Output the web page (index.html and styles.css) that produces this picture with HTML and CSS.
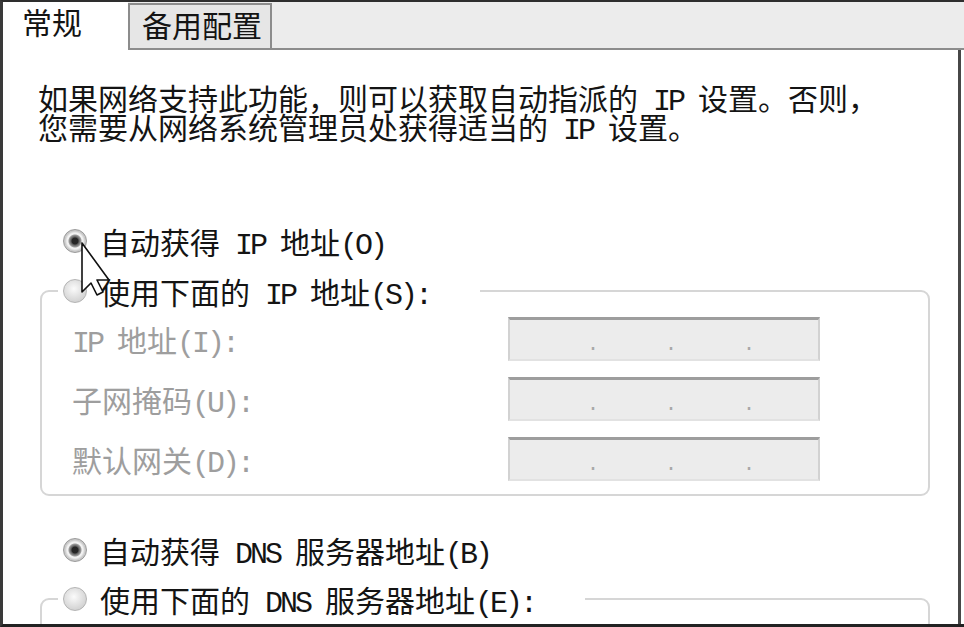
FILE: index.html
```html
<!DOCTYPE html>
<html lang="zh-CN">
<head>
  <meta charset="UTF-8" />
  <title>Internet 协议 (TCP/IP) 属性</title>
  <link rel="stylesheet" href="styles.css">
</head>
<body>
  <div class="dialog">
    <div class="tabs">
      <div class="tab tab-active">常规</div>
      <div class="tab">备用配置</div>
      <div class="tab-rest"></div>
    </div>

    <div class="panel">
      <p class="intro">如果网络支持此功能，则可以获取自动指派的<span class="en"> IP </span>设置。否则，<br>您需要从网络系统管理员处获得适当的<span class="en"> IP </span>设置。</p>

      <div class="option option-ip"><span class="radio checked"></span><span>自动获得<span class="en"> IP </span>地址<span class="en">(O)</span></span></div>
      <fieldset class="group">
        <legend class="option"><span class="radio"></span><span>使用下面的<span class="en"> IP </span>地址<span class="en">(S):</span></span></legend>
        <div class="fields">
          <span class="field-label"><span class="en">IP </span>地址<span class="en">(I):</span></span>
          <div class="ip-box"><span>.</span><span>.</span><span>.</span></div>
          <span class="field-label">子网掩码<span class="en">(U):</span></span>
          <div class="ip-box"><span>.</span><span>.</span><span>.</span></div>
          <span class="field-label">默认网关<span class="en">(D):</span></span>
          <div class="ip-box"><span>.</span><span>.</span><span>.</span></div>
        </div>
      </fieldset>

      <div class="option option-dns"><span class="radio checked"></span><span>自动获得<span class="en"> DNS </span>服务器地址<span class="en">(B)</span></span></div>
      <fieldset class="group group-dns">
        <legend class="option"><span class="radio"></span><span>使用下面的<span class="en"> DNS </span>服务器地址<span class="en">(E):</span></span></legend>
        <div class="fields"></div>
      </fieldset>
    </div>

    <!-- mouse pointer over the first radio -->
    <svg class="cursor" width="34" height="60" viewBox="0 0 34 60">
      <polygon points="1,1 1,50 10,41 16,53 22,50 16,38 28,38" fill="#fff" stroke="#111" stroke-width="1.6" stroke-linejoin="round"/>
    </svg>
  </div>
</body>
</html>
```

FILE: styles.css
```css
* {
  box-sizing: border-box;
  margin: 0;
  padding: 0;
}
body {
  width: 964px;
  height: 627px;
  overflow: hidden;
  background: #fff;
  color: #141414;
  font-family: "Liberation Mono", "Noto Sans CJK SC", monospace;
  font-size: 30px;
}
.en {
  letter-spacing: -3px;
}
.dialog {
  position: relative;
  display: flex;
  flex-direction: column;
  width: 964px;
  height: 627px;
  border-top: 2px solid #2e2e2e;
  border-left: 3px solid #3a3a3a;
  border-bottom: 3px solid #222;
}
.tabs {
  display: flex;
  align-items: flex-end;
  height: 48px;
  background: #ececec;
}
.tab {
  height: 47px;
  padding: 0 8px 0 12px;
  line-height: 48px;
  background: #e6e6e6;
  border: 2px solid #8c8c8c;
  border-bottom: none;
  box-shadow: inset 0 -2px 0 #8c8c8c;
}
.tab-active {
  width: 125px;
  height: 48px;
  padding-left: 19px;
  line-height: 48px;
  background: #fff;
  border: none;
  box-shadow: none;
}
.tab-rest {
  flex: 1;
  height: 48px;
  border-bottom: 2px solid #8c8c8c;
}
.panel {
  flex: 1;
  overflow: hidden;
  margin-right: 3px;
  padding-left: 35px;
  background: #fff;
  border-right: 3px solid #474747;
}
.intro {
  margin-top: 38px;
  line-height: 29px;
  white-space: nowrap;
}
.option {
  display: flex;
  align-items: center;
  height: 50px;
  white-space: nowrap;
}
.option-ip {
  margin-top: 70px;
  padding-left: 25px;
}
.radio {
  flex: none;
  width: 24px;
  height: 24px;
  margin-right: 13px;
  border-radius: 50%;
  border: 1px solid #b4b4b4;
  background: radial-gradient(circle at 45% 40%, #fbfbfb 0, #e2e2e2 45%, #c4c4c4 100%);
}
.radio.checked {
  border-color: #9a9a9a;
  background: radial-gradient(circle, #262626 0 3px, #5e5e5e 4px, #9c9c9c 6px, #f2f2f2 7px 8px, #c9c9c9 10px);
}
.group {
  width: 890px;
  margin: 0 0 0 2px;
  padding: 0 0 13px 30px;
  border: 2px solid #d6d6d6;
  border-radius: 9px;
}
.group legend {
  margin-left: -14px;
  padding: 0 50px 0 5px;
}
.fields {
  display: grid;
  grid-template-columns: 436px 312px;
  grid-auto-rows: 44px;
  row-gap: 16px;
  align-items: center;
  padding-top: 1px;
}
.field-label {
  color: #9e9e9e;
  white-space: nowrap;
}
.ip-box {
  display: flex;
  align-items: flex-end;
  gap: 66px;
  height: 44px;
  padding: 0 0 4px 77px;
  background: #ececec;
  border-top: 3px solid #9d9d9d;
  border-left: 2px solid #d2d2d2;
  border-right: 2px solid #d2d2d2;
  border-bottom: 2px solid #e2e2e2;
  color: #a8a8a8;
  font-size: 20px;
  line-height: 20px;
}
.ip-box span {
  width: 12px;
}
.option-dns {
  margin-top: 29px;
  padding-left: 25px;
}
.group-dns {
  margin-top: -1px;
}
.group-dns .fields {
  height: 60px;
}
.cursor {
  position: absolute;
  left: 78px;
  top: 240px;
}
```
